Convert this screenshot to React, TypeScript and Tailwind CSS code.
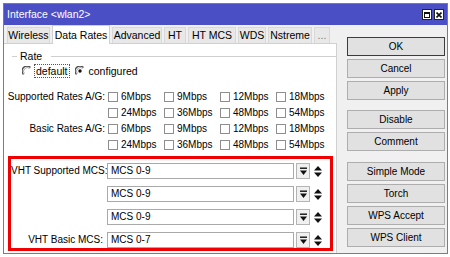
import React from "react";

const font = { fontFamily: '"Liberation Sans", Arial, sans-serif' };

function Radio({ checked }: { checked?: boolean }) {
  return (
    <svg width="10" height="10" viewBox="0 0 10 10" className="shrink-0">
      <path d="M8.5 1.5 A4.9 4.9 0 0 0 1.5 8.5" stroke="#4a4a4a" strokeWidth="1.3" fill="none" />
      <path d="M7.6 2.4 A3.7 3.7 0 0 0 2.4 7.6" stroke="#9a9a9a" strokeWidth="0.9" fill="none" />
      {checked && <circle cx="5" cy="5" r="1.7" fill="#111" />}
    </svg>
  );
}

function Check({ label }: { label: string }) {
  return (
    <div className="flex items-center w-[56px] shrink-0">
      <div className="w-[10px] h-[10px] border border-[#8e8e8e] bg-white shrink-0" />
      <span className="ml-[3px] whitespace-nowrap">{label}</span>
    </div>
  );
}

function RateRow({ label, rates }: { label: string; rates: string[] }) {
  return (
    <div className="flex items-center h-[16px]">
      <div className="w-[104px] shrink-0 text-right pr-[3px] whitespace-nowrap">{label}</div>
      <div className="flex">
        {rates.map((r) => (
          <Check key={r} label={r} />
        ))}
      </div>
    </div>
  );
}

function DropIcon() {
  return (
    <svg width="7" height="9" viewBox="0 0 7 9">
      <rect x="0" y="0.5" width="7" height="1.4" fill="#111" />
      <polygon points="0,3.5 7,3.5 3.5,8" fill="#111" />
    </svg>
  );
}

function UpDown() {
  return (
    <svg width="8" height="11" viewBox="0 0 8 11">
      <polygon points="0,4.5 8,4.5 4,0" fill="#111" />
      <polygon points="0,6.5 8,6.5 4,11" fill="#111" />
    </svg>
  );
}

function McsRow({ label, value }: { label: string; value: string }) {
  return (
    <div className="flex items-center h-[16px]">
      <div className="w-[95px] shrink-0 text-right pr-[3px] whitespace-nowrap">{label}</div>
      <div className="ml-[1px] w-[187px] h-[16px] bg-white border border-[#a9a9a9] flex items-center pl-[3px]">
        {value}
      </div>
      <div className="ml-[2px] w-[14px] h-[16px] bg-[#f0f0f0] border border-[#b4b4b4] flex items-center justify-center">
        <DropIcon />
      </div>
      <div className="ml-[4px] flex items-center">
        <UpDown />
      </div>
    </div>
  );
}

function Btn({ children, primary, className = "" }: { children: React.ReactNode; primary?: boolean; className?: string }) {
  return (
    <div
      className={`h-[19px] w-[98px] flex items-center justify-center bg-[#e1e1e1] border ${
        primary ? "border-[#3c3c3c]" : "border-[#adadad]"
      } ${className}`}
    >
      {children}
    </div>
  );
}

const tabs: { t: string; w: string }[] = [
  { t: "Wireless", w: "w-[43px]" },
  { t: "Data Rates", w: "w-[58px]" },
  { t: "Advanced", w: "w-[50px]" },
  { t: "HT", w: "w-[22px]" },
  { t: "HT MCS", w: "w-[48px]" },
  { t: "WDS", w: "w-[28px]" },
  { t: "Nstreme", w: "w-[44px]" },
  { t: "...", w: "w-[16px]" },
];

export default function App() {
  return (
    <div className="w-[450px] h-[257px] bg-white overflow-hidden text-[10px] text-black leading-none" style={font}>
      <div className="ml-[3px] mt-[3px] w-[445px] h-[251px] border border-[#7d7d7d] flex flex-col">
        {/* Title bar */}
        <div className="h-[21px] bg-[#4b4fc6] flex items-center pl-[3px] pr-[3px] text-white">
          <span className="text-[10.5px]">Interface &lt;wlan2&gt;</span>
          <div className="ml-auto flex items-center gap-[2px]">
            <div className="w-[10px] h-[11px] bg-white border border-[#222] flex items-center justify-center">
              <div className="w-[6px] h-[6px] border border-[#111] border-t-2" />
            </div>
            <div className="w-[10px] h-[11px] bg-white border border-[#222] flex items-center justify-center">
              <svg width="6" height="6" viewBox="0 0 6 6">
                <path d="M0.5 0.5 L5.5 5.5 M5.5 0.5 L0.5 5.5" stroke="#111" strokeWidth="1.6" />
              </svg>
            </div>
          </div>
        </div>
        {/* Body */}
        <div className="flex-1 bg-[#f0f0f0] flex">
          {/* Left */}
          <div className="w-[333px] flex flex-col">
            <div className="h-[18px] flex items-end pl-[3px] gap-[2px] text-[10.5px]">
              {tabs.map(({ t, w }) =>
                t === "Data Rates" ? (
                  <div
                    key={t}
                    className={`${w} h-[19px] -mb-[1px] bg-white border border-b-0 border-[#d0d0d0] flex items-center justify-center whitespace-nowrap relative z-10`}
                  >
                    {t}
                  </div>
                ) : (
                  <div
                    key={t}
                    className={`${w} h-[16px] bg-[#e8e8e8] border border-b-0 border-[#d8d8d8] flex items-center justify-center whitespace-nowrap ${
                      t === "..." ? "text-[#777]" : ""
                    }`}
                  >
                    {t}
                  </div>
                )
              )}
            </div>
            <div className="flex-1 bg-white border-t border-r border-[#d0d0d0] flex flex-col">
              {/* Rate group */}
              <div className="flex items-center h-[10px] mt-[7px] text-[10.5px]">
                <div className="ml-[8px] w-[5px] h-px bg-[#cfcfcf]" />
                <span className="ml-[3px]">Rate</span>
                <div className="ml-[9px] w-[288px] h-px bg-[#cfcfcf]" />
              </div>
              <div className="flex items-center h-[14px] mt-[3px] ml-[18px] text-[10.5px]">
                <Radio />
                <span className="ml-[2px] px-[1px] h-[14px] flex items-center border border-dotted border-[#555]">default</span>
                <span className="ml-[5px] flex items-center">
                  <Radio checked />
                  <span className="ml-[4px]">configured</span>
                </span>
              </div>
              <div className="mt-[11px]">
                <RateRow label="Supported Rates A/G:" rates={["6Mbps", "9Mbps", "12Mbps", "18Mbps"]} />
                <RateRow label="" rates={["24Mbps", "36Mbps", "48Mbps", "54Mbps"]} />
                <RateRow label="Basic Rates A/G:" rates={["6Mbps", "9Mbps", "12Mbps", "18Mbps"]} />
                <RateRow label="" rates={["24Mbps", "36Mbps", "48Mbps", "54Mbps"]} />
              </div>
              <div className="ml-[4px] mt-[3px] w-[325px] h-[95px] border-[3px] border-[#f00000] pt-[4px] flex flex-col gap-[7px]">
                <McsRow label="VHT Supported MCS:" value="MCS 0-9" />
                <McsRow label="" value="MCS 0-9" />
                <McsRow label="" value="MCS 0-9" />
                <McsRow label="VHT Basic MCS:" value="MCS 0-7" />
              </div>
            </div>
          </div>
          {/* Right buttons */}
          <div className="pl-[10px] pt-[12px] flex flex-col">
            <Btn primary>OK</Btn>
            <Btn className="mt-[3px]">Cancel</Btn>
            <Btn className="mt-[3px]">Apply</Btn>
            <Btn className="mt-[10px]">Disable</Btn>
            <Btn className="mt-[3px]">Comment</Btn>
            <Btn className="mt-[11px]">Simple Mode</Btn>
            <Btn className="mt-[3px]">Torch</Btn>
            <Btn className="mt-[3px]">WPS Accept</Btn>
            <Btn className="mt-[3px]">WPS Client</Btn>
          </div>
        </div>
      </div>
    </div>
  );
}
